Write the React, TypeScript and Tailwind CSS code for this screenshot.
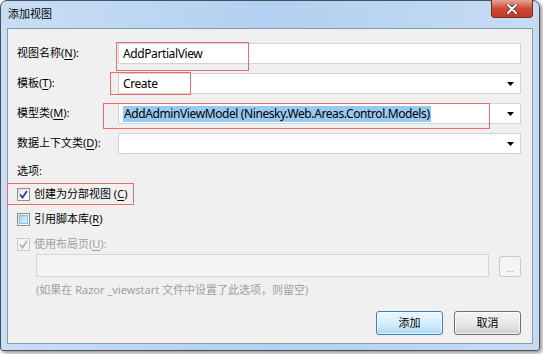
import React from "react";

const F = { fontFamily: '"Noto Sans", "Noto Sans CJK SC", sans-serif' };

function U({ c }: { c: string }) {
  return <span className="underline underline-offset-[2px]">{c}</span>;
}

function Arrow() {
  return (
    <svg width="7" height="4" viewBox="0 0 7 4" className="shrink-0">
      <path d="M0 0 H7 L3.5 4 Z" fill="#000" />
    </svg>
  );
}

function Field({ children, combo }: { children?: React.ReactNode; combo?: boolean }) {
  return (
    <div className="h-[21px] flex-1 bg-white border border-[#cdd4dc] flex items-center pl-[4px] pr-[6px]">
      <div className="flex-1 flex items-center min-w-0 text-[12px] tracking-[-0.4px] text-black whitespace-nowrap">{children}</div>
      {combo && <Arrow />}
    </div>
  );
}

function Check({ checked, disabled }: { checked?: boolean; disabled?: boolean }) {
  return (
    <div
      className={
        "w-[13px] h-[13px] border flex items-center justify-center shrink-0 " +
        (disabled
          ? "border-[#c8c8c8] bg-[#f4f4f4]"
          : "border-[#8e8f8f] bg-gradient-to-br from-[#dcdcdc] via-[#f4f4f4] to-white")
      }
    >
      {checked ? (
        <svg width="9" height="9" viewBox="0 0 9 9">
          <path
            d="M1 4.5 L3.5 7.5 L8 1"
            stroke={disabled ? "#b0b0b0" : "#2b3d7a"}
            strokeWidth="1.7"
            fill="none"
          />
        </svg>
      ) : (
        <div className="w-[9px] h-[9px] bg-gradient-to-br from-[#9fd3f5] to-[#e5f4fd] border border-[#8fbfe3]" />
      )}
    </div>
  );
}

export default function App() {
  return (
    <div className="w-[543px] h-[354px] bg-white relative overflow-hidden" style={F}>
      <div className="w-[540px] h-[351px] rounded-t-[7px] rounded-b-[3px] border border-[#4a5058] bg-gradient-to-r from-[#c9def5] via-[#b2d0f1] to-[#c6dcf3] flex flex-col shadow-[2px_2px_4px_rgba(0,0,0,0.45)]">
        <div className="h-[27px] flex items-start justify-between pl-[7px] pr-[6px] shrink-0">
          <span className="text-[11px] text-black mt-[6px] leading-[14px]">添加视图</span>
          <div className="w-[42px] h-[18px] -mt-[1px] rounded-b-[4px] border border-[#7a2a20] border-t-0 bg-gradient-to-b from-[#e8a493] via-[#cf4a36] to-[#c33a26] flex items-center justify-center">
            <svg width="12" height="10" viewBox="0 0 12 10">
              <path d="M2 1 L10 9 M10 1 L2 9" stroke="#3a3a3a" strokeWidth="3.4" strokeLinecap="round" />
              <path d="M2 1 L10 9 M10 1 L2 9" stroke="#fff" strokeWidth="2" strokeLinecap="round" />
            </svg>
          </div>
        </div>
        <div className="flex-1 mx-[6px] mb-[6px] border border-[#8b9aab] bg-[#f0f0f0] flex flex-col pl-[9px] pr-[11px] pt-[14px] text-[11px] text-black">
          <div className="flex flex-col gap-[9px]">
            <div className="flex items-center">
              <span className="w-[101px]">视图名称(<U c="N" />):</span>
              <Field>AddPartialView</Field>
            </div>
            <div className="flex items-center">
              <span className="w-[101px]">模板(<U c="T" />):</span>
              <Field combo>Create</Field>
            </div>
            <div className="flex items-center">
              <span className="w-[101px]">模型类(<U c="M" />):</span>
              <Field combo>
                <span className="bg-[#99c9ef] leading-[16px] px-[1px]">
                  AddAdminViewModel (Ninesky.Web.Areas.Control.Models)
                </span>
              </Field>
            </div>
            <div className="flex items-center">
              <span className="w-[101px]">数据上下文类(<U c="D" />):</span>
              <Field combo />
            </div>
          </div>
          <div className="mt-[9px] leading-[16px]">选项:</div>
          <div className="mt-[8px] flex items-center gap-[4px] h-[14px]">
            <Check checked />
            <span>创建为分部视图 (<U c="C" />)</span>
          </div>
          <div className="mt-[11px] flex items-center gap-[4px] h-[14px]">
            <Check />
            <span>引用脚本库(<U c="R" />)</span>
          </div>
          <div className="mt-[11px] flex items-center gap-[4px] h-[14px] text-[#a0a0a0]">
            <Check checked disabled />
            <span>使用布局页(<U c="U" />):</span>
          </div>
          <div className="mt-[3px] pl-[19px] flex items-end gap-[10px]">
            <div className="flex-1 h-[23px] border border-[#d5d5d5] bg-[#f4f4f4]" />
            <div className="w-[22px] h-[21px] rounded-[3px] border border-[#c8c8c8] bg-[#f4f4f4] flex items-center justify-center text-[9px] text-[#a0a0a0] leading-none pt-[3px]">
              ...
            </div>
          </div>
          <div className="mt-[5px] pl-[19px] text-[#a0a0a0] leading-[16px]">
            (如果在 Razor _viewstart 文件中设置了此选项，则留空)
          </div>
          <div className="mt-[13px] flex justify-end gap-[11px]">
            <div className="w-[67px] h-[24px] rounded-[3px] border border-[#3c7fb1] bg-gradient-to-b from-[#eaf6fd] via-[#d9f0fc] to-[#a7d9f5] shadow-[inset_0_0_0_1px_rgba(255,255,255,0.7)] flex items-center justify-center">
              添加
            </div>
            <div className="w-[67px] h-[24px] rounded-[3px] border border-[#707070] bg-gradient-to-b from-[#f2f2f2] via-[#ebebeb] to-[#cfcfcf] shadow-[inset_0_0_0_1px_rgba(255,255,255,0.7)] flex items-center justify-center">
              取消
            </div>
          </div>
        </div>
      </div>
      {/* red annotation boxes */}
      <div className="absolute left-[116px] top-[42px] w-[133px] h-[29px] border-[1.5px] border-[#ee6b6b]" />
      <div className="absolute left-[110px] top-[72px] w-[81px] h-[23px] border-[1.5px] border-[#ee6b6b]" />
      <div className="absolute left-[103px] top-[103px] w-[387px] h-[26px] border-[1.5px] border-[#ee6b6b]" />
      <div className="absolute left-[7px] top-[183px] w-[127px] h-[22px] border-[1.5px] border-[#ee6b6b]" />
    </div>
  );
}
